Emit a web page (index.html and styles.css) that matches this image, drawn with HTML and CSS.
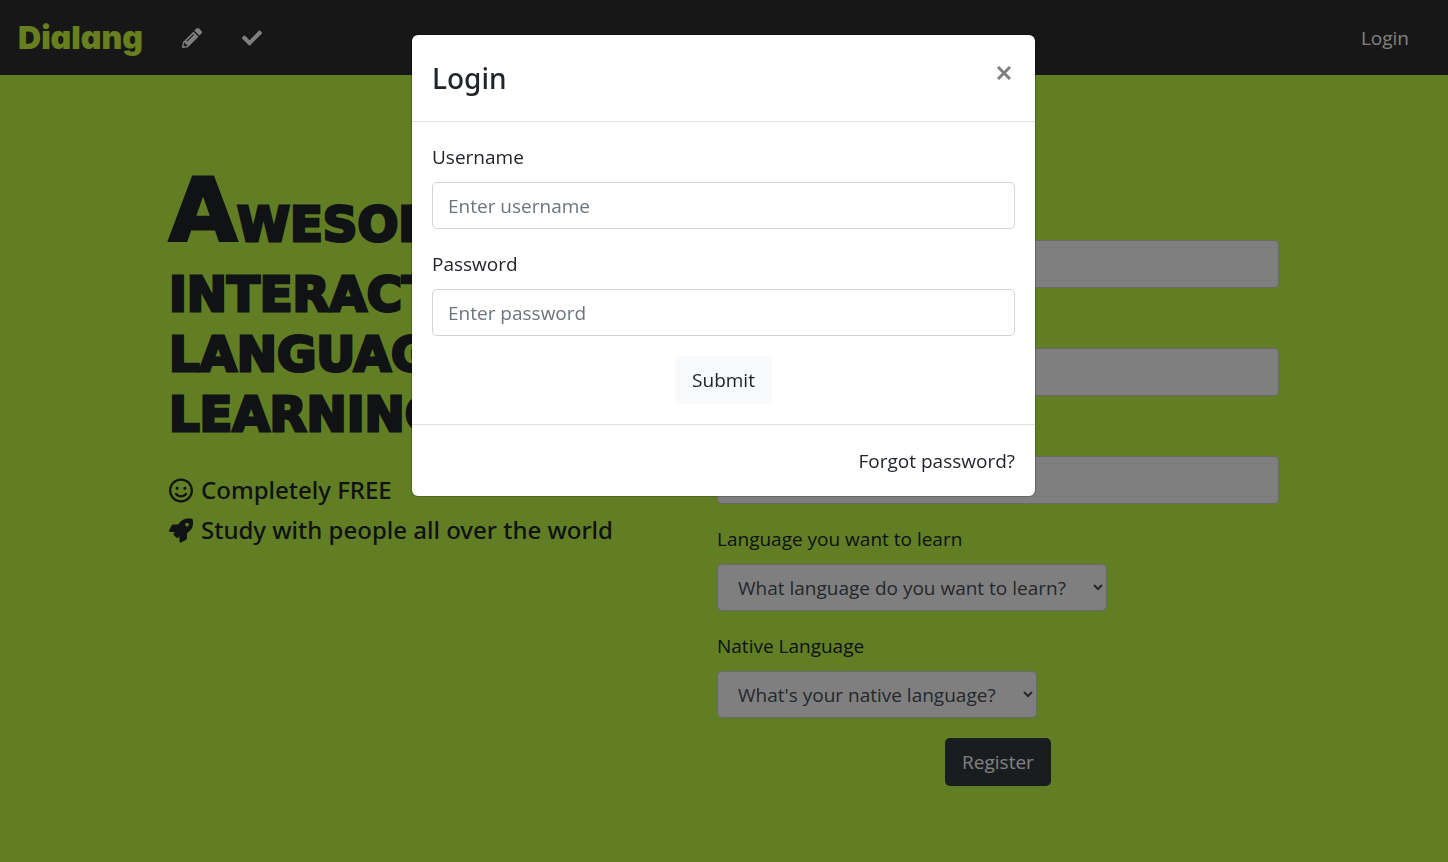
FILE: index.html
```html
<!DOCTYPE html>
<html lang="en">
<head>
<meta charset="utf-8">
<meta name="viewport" content="width=device-width, initial-scale=1">
<title>Dialang</title>
<link rel="stylesheet" href="styles.css">
</head>
<body>
<header class="navbar">
  <a class="brand" href="#">Dialang</a>
  <nav class="nav-links">
    <a class="nav-link" href="#" aria-label="Write">
      <svg class="nav-icon" viewBox="0 0 512 512" aria-hidden="true"><path d="M497.9 142.1l-46.1 46.1c-4.7 4.7-12.3 4.7-17 0l-111-111c-4.7-4.7-4.7-12.3 0-17l46.1-46.1c18.7-18.7 49.1-18.7 67.9 0l60.1 60.1c18.8 18.7 18.8 49.1 0 67.9zM284.2 99.8L21.6 362.4.4 483.9c-2.9 16.4 11.4 30.6 27.8 27.8l121.5-21.3 262.6-262.6c4.7-4.7 4.7-12.3 0-17l-111-111c-4.8-4.7-12.4-4.7-17.1 0zM124.1 339.9c-5.5-5.5-5.5-14.3 0-19.8l154-154c5.5-5.5 14.3-5.5 19.8 0s5.5 14.3 0 19.8l-154 154c-5.5 5.5-14.3 5.5-19.8 0zM88 424h48v36.3l-64.5 11.3-31.1-31.1L51.7 376H88v48z"/></svg>
    </a>
    <a class="nav-link" href="#" aria-label="Correct">
      <svg class="nav-icon" viewBox="0 0 512 512" aria-hidden="true"><path d="M173.898 439.404l-166.4-166.4c-9.997-9.997-9.997-26.206 0-36.204l36.203-36.204c9.997-9.998 26.207-9.998 36.204 0L192 312.69 432.095 72.596c9.997-9.997 26.207-9.997 36.204 0l36.203 36.204c9.997 9.997 9.997 26.206 0 36.204l-294.4 294.401c-9.998 9.997-26.207 9.997-36.204-.001z"/></svg>
    </a>
  </nav>
  <a class="nav-link login-link" href="#">Login</a>
</header>

<main class="landing">
  <section class="pitch">
    <h1 class="headline">Awesome interactive language learning</h1>
    <p class="perk">
      <svg class="perk-icon" viewBox="0 0 496 512" aria-hidden="true"><path d="M248 8C111 8 0 119 0 256s111 248 248 248 248-111 248-248S385 8 248 8zm0 448c-110.3 0-200-89.7-200-200S137.7 56 248 56s200 89.7 200 200-89.7 200-200 200zm-80-216c17.7 0 32-14.3 32-32s-14.3-32-32-32-32 14.3-32 32 14.3 32 32 32zm160 0c17.7 0 32-14.3 32-32s-14.3-32-32-32-32 14.3-32 32 14.3 32 32 32zm4 72.6c-20.8 25-51.5 39.4-84 39.4s-63.2-14.3-84-39.4c-8.5-10.2-23.7-11.5-33.8-3.1-10.2 8.5-11.5 23.6-3.1 33.8 30 36 74.1 56.6 120.9 56.6s90.9-20.6 120.9-56.6c8.5-10.2 7.1-25.3-3.1-33.8-10.1-8.4-25.3-7.1-33.8 3.1z"/></svg>
      <span>Completely FREE</span>
    </p>
    <p class="perk">
      <svg class="perk-icon" viewBox="0 0 512 512" aria-hidden="true"><path d="M505.12 19.094c-1.19-5.531-6.658-11-12.207-12.188C460.716 0 435.507 0 410.407 0 307.175 0 245.269 55.203 199.052 128H94.838c-16.348.016-35.557 11.875-42.887 26.484L2.516 253.297A28.4 28.4 0 0 0 0 264a24.009 24.009 0 0 0 24.006 24h103.81l-22.474 22.469c-11.365 11.361-12.996 32.258 0 45.25l50.904 50.906c11.156 11.188 32.156 13.156 45.277 0l22.475-22.469V488a24.009 24.009 0 0 0 24.006 24 28.56 28.56 0 0 0 10.707-2.516l98.728-49.39c14.629-7.297 26.508-26.5 26.508-42.86V312.797c72.597-46.313 128.035-108.406 128.035-211.094.093-25.203.093-50.406-6.862-82.609zM384.04 168A40 40 0 1 1 424.05 128a40.023 40.023 0 0 1-40.01 40z"/></svg>
      <span>Study with people all over the world</span>
    </p>
  </section>

  <form class="register">
    <div class="field">
      <label for="reg-username">Username</label>
      <input class="control" id="reg-username" type="text">
    </div>
    <div class="field">
      <label for="reg-email">Email</label>
      <input class="control" id="reg-email" type="email">
    </div>
    <div class="field">
      <label for="reg-password">Password</label>
      <input class="control" id="reg-password" type="password">
    </div>
    <div class="field">
      <label for="reg-learn">Language you want to learn</label>
      <select class="control select" id="reg-learn"><option>What language do you want to learn?</option></select>
    </div>
    <div class="field">
      <label for="reg-native">Native Language</label>
      <select class="control select" id="reg-native"><option>What's your native language?</option></select>
    </div>
    <button class="btn btn-dark" type="submit">Register</button>
  </form>
</main>

<div class="backdrop">
  <div class="modal" role="dialog" aria-modal="true" aria-labelledby="modal-title">
    <div class="modal-header">
      <h2 class="modal-title" id="modal-title">Login</h2>
      <button class="close" type="button" aria-label="Close">
        <svg class="close-icon" viewBox="0 0 14 14" aria-hidden="true"><path d="M1 1l12 12M13 1l-12 12"/></svg>
      </button>
    </div>
    <form class="modal-body">
      <div class="field">
        <label for="username">Username</label>
        <input class="control" id="username" type="text" placeholder="Enter username">
      </div>
      <div class="field">
        <label for="password">Password</label>
        <input class="control" id="password" type="password" placeholder="Enter password">
      </div>
      <button class="btn btn-light" type="submit">Submit</button>
    </form>
    <div class="modal-footer">
      <a class="forgot" href="#">Forgot password?</a>
    </div>
  </div>
</div>
</body>
</html>
```
FILE: styles.css
```css
*, *::before, *::after {
  box-sizing: border-box;
}

body {
  margin: 0;
  min-height: 100vh;
  background: #c2fc4a;
  color: #212529;
  font-family: "Open Sans", "Noto Sans", sans-serif;
  font-size: 19px;
  line-height: 30px;
}

h1, h2, p {
  margin: 0;
}

a {
  color: inherit;
  text-decoration: none;
}

.navbar {
  display: flex;
  align-items: center;
  height: 75px;
  padding: 0 39px 0 18px;
  background: #2e2e2e;
  color: #fff;
}

.brand {
  color: #d0ff40;
  font-family: Inter, sans-serif;
  font-size: 32px;
  font-weight: 900;
  font-feature-settings: "cv11";
}

.nav-links {
  display: flex;
  gap: 40px;
  margin-left: 39px;
}

.nav-link {
  display: flex;
  color: #fff;
}

.nav-icon {
  width: 20px;
  height: 20px;
  fill: currentColor;
}

.login-link {
  margin-left: auto;
}

.landing {
  display: grid;
  grid-template-columns: 548fr 562fr;
  max-width: 1110px;
  margin: 0 auto;
  padding-top: 82px;
}

.headline {
  max-width: 480px;
  margin-bottom: 26px;
  font-family: "DejaVu Sans", sans-serif;
  font-size: 48px;
  font-weight: 700;
  line-height: 60px;
  text-transform: uppercase;
  -webkit-text-stroke: 3px #212529;
}

.headline::first-letter {
  font-size: 88px;
  line-height: 107px;
}

.perk {
  display: flex;
  align-items: center;
  gap: 8px;
  height: 40px;
  font-family: "Noto Sans", sans-serif;
  font-size: 24px;
  font-weight: 500;
}

.perk-icon {
  width: 24px;
  height: 25px;
  fill: currentColor;
}

.register {
  padding-top: 43px;
}

.register input {
  height: 48px;
}

.field {
  display: flex;
  flex-direction: column;
  align-items: flex-start;
  gap: 10px;
  margin-bottom: 20px;
}

.control {
  width: 100%;
  height: 47px;
  padding: 0 15px;
  border: 1px solid #ced4da;
  border-radius: 5px;
  background: #fff;
  color: #495057;
  font: inherit;
}

.control::placeholder {
  color: #6c757d;
  opacity: 1;
}

.select {
  width: auto;
  padding: 0 24px 0 16px;
}

.btn {
  display: block;
  height: 48px;
  margin: 0 auto;
  padding: 0 16px;
  border: 1px solid transparent;
  border-radius: 5px;
  font: inherit;
}

.btn-dark {
  background: #343a40;
  color: #fff;
}

.btn-light {
  background: #f8f9fa;
  color: #212529;
}

.backdrop {
  position: fixed;
  inset: 0;
  padding: 35px 17px 35px 16px;
  background: rgba(0, 0, 0, 0.5);
}

.modal {
  max-width: 623px;
  margin: 0 auto;
  border-radius: 6px;
  background: #fff;
  box-shadow: 0 0 0 1px rgba(0, 0, 0, 0.2);
}

.modal-header {
  display: flex;
  align-items: flex-start;
  justify-content: space-between;
  padding: 20px;
  border-bottom: 1px solid #dee2e6;
}

.modal-title {
  font-family: "Noto Sans", sans-serif;
  font-size: 28px;
  font-weight: 500;
  line-height: 46px;
}

.close {
  display: flex;
  padding: 11px 4px;
  border: 0;
  background: none;
}

.close-icon {
  width: 14px;
  height: 14px;
  fill: none;
  stroke: #7f7f7f;
  stroke-width: 3;
}

.modal-body {
  padding: 20px;
}

.modal-footer {
  padding: 21px 20px 20px;
  border-top: 1px solid #dee2e6;
  text-align: right;
}
```
